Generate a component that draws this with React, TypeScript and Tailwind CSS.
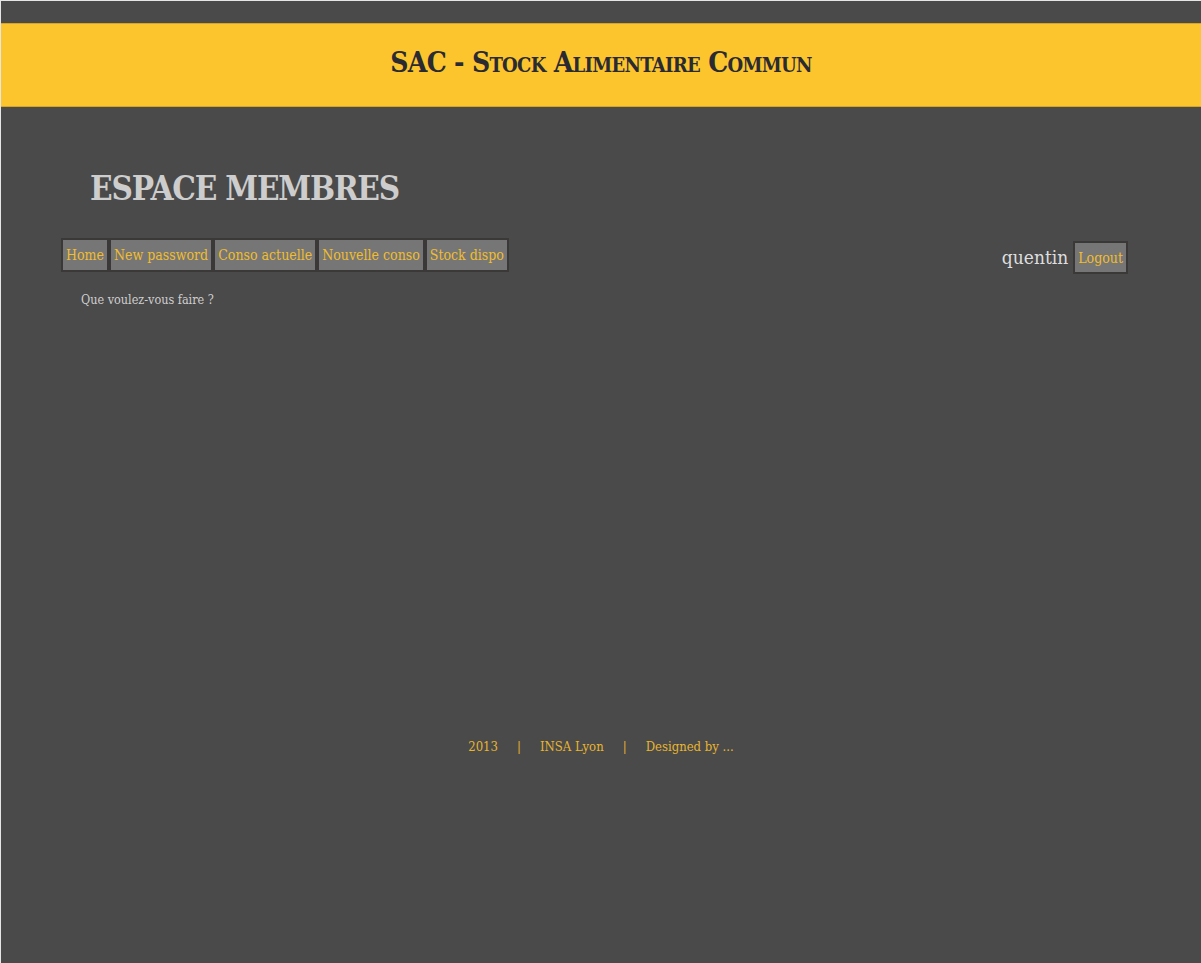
const navItems = ["Home", "New password", "Conso actuelle", "Nouvelle conso", "Stock dispo"];

const slab = "font-['DejaVu_Serif_Condensed','DejaVu_Serif',serif]";

export default function App() {
  return (
    <div className="min-h-[963px] w-full border-l border-t border-[#e6e6e6] bg-[#4a4a4a]">
      {/* Header */}
      <div className="pt-[22px]">
        <div className="flex h-[84px] items-center justify-center border-y border-[#d9a521] bg-[#fdc52d] pb-[5px]">
          <h1
            className={`${slab} text-[28px] font-bold tracking-[-0.7px] text-[#2a2a33] [font-variant:small-caps]`}
          >
            SAC - Stock Alimentaire Commun
          </h1>
        </div>
      </div>

      {/* Title */}
      <div className="px-[89px] pt-[62px]">
        <h2 className={`${slab} text-[33px] font-bold leading-[40px] tracking-[-1.2px] text-[#cdcdcd]`}>
          ESPACE MEMBRES
        </h2>
      </div>

      {/* Nav */}
      <div className="mt-[29px] flex items-start justify-between pl-[60px] pr-[73px]">
        <div className="flex">
          {navItems.map((item) => (
            <a
              key={item}
              className={`${slab} flex h-[34px] items-center border-2 border-[#3b3937] bg-[#767676] px-[3px] text-[14px] text-[#f0bd2e]`}
            >
              {item}
            </a>
          ))}
        </div>
        <div className="mt-[3px] flex items-center gap-[5px]">
          <span className={`${slab} text-[19px] text-[#dedede]`}>quentin</span>
          <a
            className={`${slab} flex h-[33px] items-center border-2 border-[#3b3937] bg-[#767676] px-[3px] pt-[2px] text-[14px] text-[#f0bd2e]`}
          >
            Logout
          </a>
        </div>
      </div>

      <p className={`${slab} ml-[80px] mt-[17px] text-[12.5px] text-[#cfcfcf]`}>
        Que voulez-vous faire ?
      </p>

      {/* Footer */}
      <div
        className={`${slab} mt-[427px] flex justify-center gap-[19px] text-[13px] text-[#e8b52e]`}
      >
        <span>2013</span>
        <span>|</span>
        <span>INSA Lyon</span>
        <span>|</span>
        <span>Designed by ...</span>
      </div>
    </div>
  );
}
